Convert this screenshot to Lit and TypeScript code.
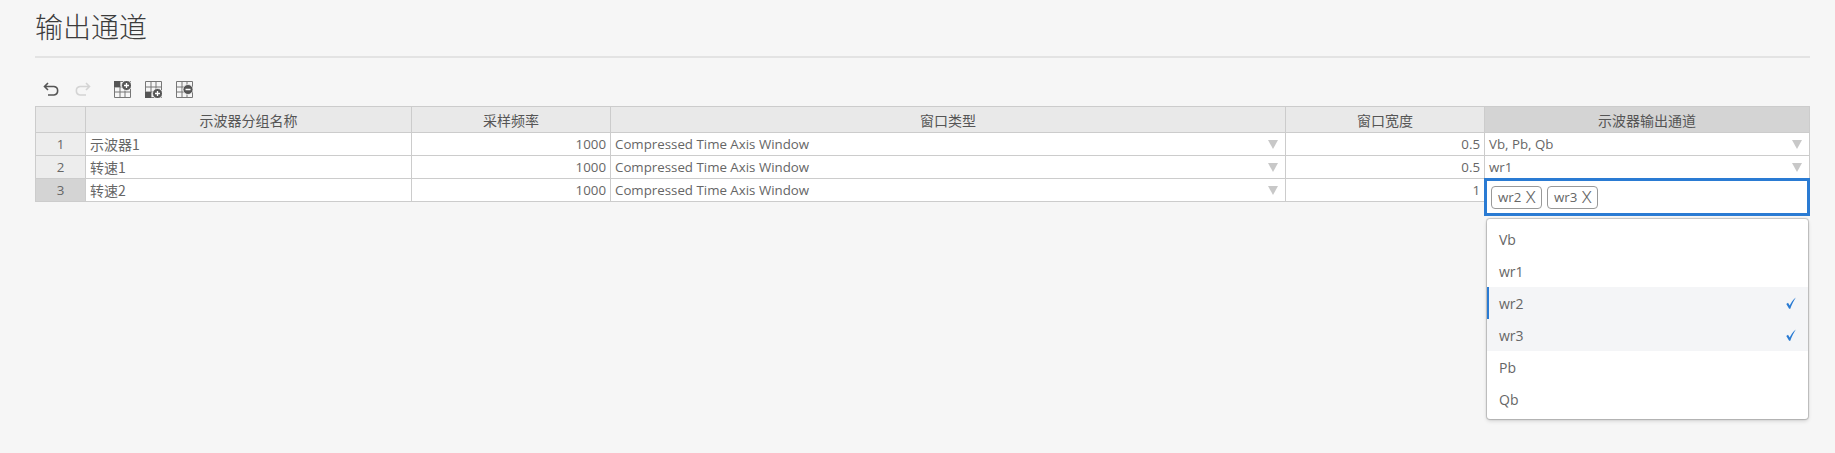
import { LitElement, html, css, svg } from "lit";
import { customElement } from "lit/decorators.js";

const COLS = ["示波器分组名称", "采样频率", "窗口类型", "窗口宽度", "示波器输出通道"];
const ROWS = [
  { name: "示波器1", freq: "1000", type: "Compressed Time Axis Window", width: "0.5", out: "Vb, Pb, Qb" },
  { name: "转速1", freq: "1000", type: "Compressed Time Axis Window", width: "0.5", out: "wr1" },
  { name: "转速2", freq: "1000", type: "Compressed Time Axis Window", width: "1", out: "" },
];
const OPTIONS = [
  { label: "Vb" },
  { label: "wr1" },
  { label: "wr2", on: true, cur: true },
  { label: "wr3", on: true },
  { label: "Pb" },
  { label: "Qb" },
];

const grid = svg`<path d="M.5.5h16v16H.5zM.5 6h16M.5 11h16M6 .5v16M11 .5v16" fill="none" stroke="#777" stroke-width="1"/>`;
const iconAbove = html`<svg width="17" height="17" viewBox="0 0 17 17">${grid}
  <rect x="0" y="0" width="6" height="6" fill="#555"/>
  <circle cx="12.500" cy="4.500" r="5" fill="#555" stroke="#f6f6f6" stroke-width=".8"/>
  <path d="M12.500 2v5M10 4.500h5" stroke="#fff" stroke-width="1.300"/></svg>`;
const iconBelow = html`<svg width="17" height="17" viewBox="0 0 17 17">${grid}
  <rect x="0" y="11" width="6" height="6" fill="#555"/>
  <circle cx="12.500" cy="12.500" r="5" fill="#555" stroke="#f6f6f6" stroke-width=".8"/>
  <path d="M12.500 10v5M10 12.500h5" stroke="#fff" stroke-width="1.300"/></svg>`;
const iconRemove = html`<svg width="17" height="17" viewBox="0 0 17 17">${grid}
  <circle cx="12" cy="8.500" r="5" fill="#555" stroke="#f6f6f6" stroke-width=".8"/>
  <path d="M9.500 8.500h5" stroke="#fff" stroke-width="1.500"/></svg>`;
const undo = html`<svg width="17" height="14" viewBox="0 0 17 14"><path d="M5 1 1.500 4.500 5 8M2 4.500h9a4.300 4.300 0 0 1 0 8.500H5" fill="none" stroke="#555" stroke-width="1.600"/></svg>`;
const redo = html`<svg width="17" height="14" viewBox="0 0 17 14"><path d="M12 1l3.500 3.500L12 8M15 4.500H6a4.300 4.300 0 0 0 0 8.500h6" fill="none" stroke="#d4d4d4" stroke-width="1.600"/></svg>`;
const check = html`<svg width="10" height="12" viewBox="0 0 10 12"><path d="M.3 7 2 5.800 3.700 8.500C5 5.500 7 2.800 9.800.4 7.900 3.500 5.600 7.500 4.300 11.700H3.100Z" fill="#2a7bd3"/></svg>`;
const arrow = html`<span class="arrow"></span>`;

@customElement("app-root")
export class AppRoot extends LitElement {
  static styles = css`
    :host {
      display: block;
      min-height: 453px;
      box-sizing: border-box;
      padding: 0 24px 0 35px;
      background: #f6f6f6;
      font-family: "Noto Sans CJK SC", sans-serif;
      font-size: 14px;
      color: #666;
      position: relative;
    }
    .lat {
      font-family: "Open Sans", "Noto Sans CJK SC", sans-serif;
      font-size: 13.300px;
    }
    h1 {
      margin: 0 1px 0 0;
      height: 58px;
      box-sizing: border-box;
      padding-top: 6px;
      font-size: 28px;
      line-height: 40px;
      font-weight: 300;
      color: #3c3c3c;
      border-bottom: 2px solid #e3e3e3;
    }
    .toolbar {
      display: flex;
      align-items: center;
      height: 48px;
      padding: 14px 0 0 8px;
      box-sizing: border-box;
    }
    .toolbar svg { display: block; }
    .redo { margin-left: 14px; }
    .ins { margin-left: 23px; }
    .ins + .ins { margin-left: 14px; }
    .wrap { position: relative; width: 1775px; }
    .table {
      display: grid;
      grid-template-columns: 50px 326px 199px 675px 199px 325px;
      grid-template-rows: 26px;
      grid-auto-rows: 23px;
      border-top: 1px solid #ccc;
      border-left: 1px solid #ccc;
      box-sizing: border-box;
    }
    .table > div {
      box-sizing: border-box;
      border-right: 1px solid #ccc;
      border-bottom: 1px solid #ccc;
      padding: 0 4px;
      line-height: 22px;
      white-space: nowrap;
      background: #fff;
      display: flex;
      align-items: center;
      justify-content: space-between;
    }
    .table > .h {
      background: #e9e9e9;
      justify-content: center;
      color: #555;
    }
    .table > .active { background: #d4d4d4; }
    .table > .num { justify-content: flex-end; }
    .table > .c0 { justify-content: center; background: #ededed; }
    .table > .c0.active { background: #d4d4d4; }
    .arrow {
      width: 0;
      height: 0;
      border-left: 5px solid transparent;
      border-right: 5px solid transparent;
      border-top: 9px solid #c8c8c8;
      margin-right: 3px;
    }
    .editor {
      position: absolute;
      left: 1449px;
      top: 72px;
      width: 326px;
      height: 38px;
      box-sizing: border-box;
      border: 3px solid #2a7bd3;
      background: #fff;
      display: flex;
      align-items: center;
      gap: 5px;
      padding: 0 0 0 4px;
    }
    .tag {
      display: flex;
      align-items: center;
      justify-content: space-between;
      width: 51px;
      height: 23px;
      box-sizing: border-box;
      border: 1px solid #999;
      border-radius: 4px;
      padding: 0 5px 0 6px;
    }
    .tag i { font-style: normal; font-size: 17px; font-weight: 300; font-family: Roboto, sans-serif; }
    .menu {
      position: absolute;
      left: 1452px;
      top: 113px;
      width: 321px;
      height: 200px;
      box-sizing: border-box;
      padding: 4px 0;
      background: #fff;
      border-radius: 3px;
      font-family: "Open Sans", sans-serif;
      font-size: 14px;
      box-shadow: 0 0 1px 1px rgba(0, 0, 0, .2), 0 2px 4px rgba(0, 0, 0, .15);
    }
    .opt {
      height: 32px;
      box-sizing: border-box;
      padding: 0 12px 0 10px;
      display: flex;
      align-items: center;
      justify-content: space-between;
      border-left: 2px solid transparent;
    }
    .opt.on { background: #f4f5f7; }
    .opt.cur { border-left-color: #2a7bd3; }
  `;

  render() {
    return html`
      <h1>输出通道</h1>
      <div class="toolbar">
        ${undo}<span class="redo">${redo}</span>
        <span class="ins">${iconAbove}</span><span class="ins">${iconBelow}</span><span class="ins">${iconRemove}</span>
      </div>
      <div class="wrap">
        <div class="table">
          <div class="h"></div>
          ${COLS.map((c, i) => html`<div class="h ${i === 4 ? "active" : ""}">${c}</div>`)}
          ${ROWS.map((r, i) => html`
            <div class="c0 lat ${i === 2 ? "active" : ""}">${i + 1}</div>
            <div>${r.name}</div>
            <div class="num lat">${r.freq}</div>
            <div class="lat">${r.type}${arrow}</div>
            <div class="num lat">${r.width}</div>
            <div class="lat">${r.out}${r.out ? arrow : ""}</div>
          `)}
        </div>
        <div class="editor lat">
          <span class="tag">wr2<i>X</i></span>
          <span class="tag">wr3<i>X</i></span>
        </div>
        <div class="menu">
          ${OPTIONS.map((o) => html`
            <div class="opt ${o.on ? "on" : ""} ${o.cur ? "cur" : ""}">
              <span>${o.label}</span>${o.on ? check : ""}
            </div>`)}
        </div>
      </div>
    `;
  }
}
